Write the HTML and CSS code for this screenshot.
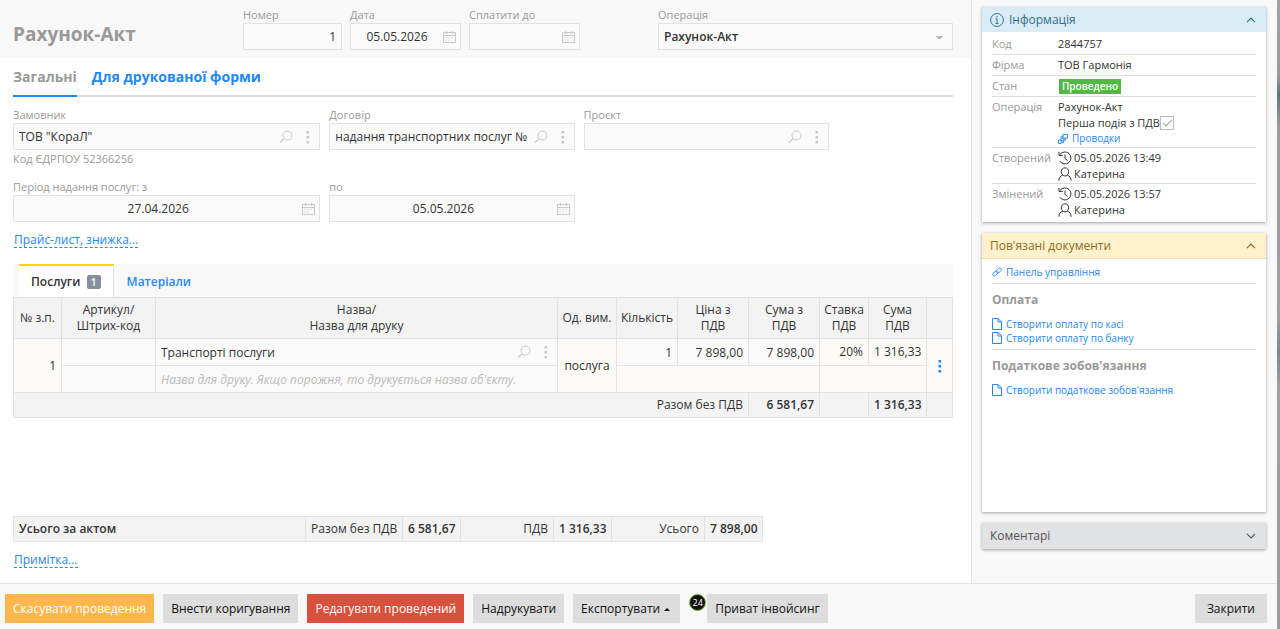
FILE: index.html
```
<!DOCTYPE html>
<html lang="uk">
  <head>
    <meta charset="UTF-8" />
    <meta name="viewport" content="width=device-width, initial-scale=1.0" />
    <title>Рахунок-Акт</title>
    <link rel="stylesheet" href="styles.css">
  </head>
  <body>
    <!-- Icons -->
    <svg class="sprite" aria-hidden="true">
      <symbol id="i-calendar" viewBox="0 0 14 14">
        <path d="M1.5 2.500h12v10h-12zM1.500 5.500h12M4.500 1v3M10.500 1v3" fill="none" stroke="currentColor" />
        <path d="M3 7.500h9M3 10h6" fill="none" stroke="currentColor" stroke-dasharray="2 1" opacity=".6" />
      </symbol>
      <symbol id="i-search" viewBox="0 0 14 14">
        <circle cx="8.500" cy="5.500" r="4.500" fill="none" stroke="currentColor" />
        <path d="M5.200 8.800 1 12.500" fill="none" stroke="currentColor" stroke-width="1.200" />
      </symbol>
      <symbol id="i-dots" viewBox="0 0 4 14">
        <path d="M.5 1h2.600v2.600H.5zM.5 6h2.600v2.600H.5zM.5 11h2.600v2.600H.5z" fill="currentColor" />
      </symbol>
      <symbol id="i-up" viewBox="0 0 10 6">
        <path d="M1 5.200 5 1.200l4 4" fill="none" stroke="currentColor" stroke-width="1.200" />
      </symbol>
      <symbol id="i-down" viewBox="0 0 10 6">
        <path d="M1 .8l4 4 4-4" fill="none" stroke="currentColor" stroke-width="1.200" />
      </symbol>
      <symbol id="i-info" viewBox="0 0 14 14">
        <circle cx="7" cy="7" r="6.400" fill="none" stroke="currentColor" />
        <path d="M7 3v1.400M5.700 5.800H7v4.600M5.500 10.500h3" fill="none" stroke="currentColor" />
      </symbol>
      <symbol id="i-history" viewBox="0 0 14 14">
        <path d="M2 3.600A6 6 0 1 1 1.800 10M1 .8v3.600h3.800M7 3.500v4l2.600 2" fill="none" stroke="currentColor" />
      </symbol>
      <symbol id="i-user" viewBox="0 0 14 14">
        <path d="M7 .8c2.300 0 3.700 1.700 3.700 4S9 9 7 9 3.300 7 3.300 4.800 4.700.8 7 .8zM4.800 8.200C2.300 9 .9 10.500.9 13.700M9.200 8.200c2.500.8 3.900 2.300 3.900 5.500" fill="none" stroke="currentColor" />
      </symbol>
      <symbol id="i-entries" viewBox="0 0 11 11">
        <path d="M5.500.5h5v4h-5zM3.500 4.500v-2h2M8 4.500v2.500H6.500M3.500 4.500h3v3h-3zM.5 6.500h3v4h-3zM3.500 9.500H6V7.500" fill="none" stroke="currentColor" />
      </symbol>
      <symbol id="i-link" viewBox="0 0 12 12">
        <rect x="4.700" y="2.300" width="7" height="3.800" rx="1.900" transform="rotate(-45 8.200 4.200)" fill="none" stroke="currentColor" />
        <rect x=".3" y="5.900" width="7" height="3.800" rx="1.900" transform="rotate(-45 3.800 7.800)" fill="none" stroke="currentColor" />
      </symbol>
      <symbol id="i-doc" viewBox="0 0 10 12">
        <path d="M.5.5H6l3.500 3.500v7.500h-9zM6 .5V4h3.500" fill="none" stroke="currentColor" />
      </symbol>
    </svg>

    <div class="window">
      <div class="workspace">
        <main class="document">
          <header class="doc-header">
            <h1>Рахунок-Акт</h1>
            <div class="field field-number">
              <label for="number">Номер</label>
              <div class="box"><input class="right" id="number" type="text" value="1" /></div>
            </div>
            <div class="field field-date">
              <label for="date">Дата</label>
              <div class="box">
                <input class="center" id="date" type="text" value="05.05.2026" />
                <button class="icon-btn" aria-label="Календар"><svg class="icon"><use href="#i-calendar" /></svg></button>
              </div>
            </div>
            <div class="field field-date">
              <label for="payUntil">Сплатити до</label>
              <div class="box">
                <input class="center" id="payUntil" type="text" />
                <button class="icon-btn" aria-label="Календар"><svg class="icon"><use href="#i-calendar" /></svg></button>
              </div>
            </div>
            <div class="field field-operation">
              <label for="operation">Операція</label>
              <div class="box">
                <select id="operation">
                  <option>Рахунок-Акт</option>
                </select>
              </div>
            </div>
          </header>

          <div class="doc-body">
            <nav class="main-tabs">
              <a class="active" href="#general">Загальні</a>
              <a href="#print">Для друкованої форми</a>
            </nav>

            <div class="form-grid">
              <div class="field">
                <label for="customer">Замовник</label>
                <div class="box">
                  <input id="customer" type="text" value='ТОВ "КораЛ"' />
                  <button class="icon-btn" aria-label="Пошук"><svg class="icon"><use href="#i-search" /></svg></button>
                  <button class="icon-btn dots" aria-label="Меню"><svg class="icon"><use href="#i-dots" /></svg></button>
                </div>
                <p class="hint">Код ЄДРПОУ 52366256</p>
              </div>
              <div class="field">
                <label for="contract">Договір</label>
                <div class="box">
                  <input id="contract" type="text" value="надання транспортних послуг № 01" />
                  <button class="icon-btn" aria-label="Пошук"><svg class="icon"><use href="#i-search" /></svg></button>
                  <button class="icon-btn dots" aria-label="Меню"><svg class="icon"><use href="#i-dots" /></svg></button>
                </div>
              </div>
              <div class="field">
                <label for="project">Проєкт</label>
                <div class="box">
                  <input id="project" type="text" />
                  <button class="icon-btn" aria-label="Пошук"><svg class="icon"><use href="#i-search" /></svg></button>
                  <button class="icon-btn dots" aria-label="Меню"><svg class="icon"><use href="#i-dots" /></svg></button>
                </div>
              </div>
            </div>

            <div class="form-grid period">
              <div class="field">
                <label for="from">Період надання послуг: з</label>
                <div class="box">
                  <input class="center" id="from" type="text" value="27.04.2026" />
                  <button class="icon-btn" aria-label="Календар"><svg class="icon"><use href="#i-calendar" /></svg></button>
                </div>
              </div>
              <div class="field">
                <label for="to">по</label>
                <div class="box">
                  <input class="center" id="to" type="text" value="05.05.2026" />
                  <button class="icon-btn" aria-label="Календар"><svg class="icon"><use href="#i-calendar" /></svg></button>
                </div>
              </div>
            </div>

            <a class="toggle-link" href="#price">Прайс-лист, знижка...</a>

            <nav class="table-tabs">
              <a class="active" href="#services">Послуги <span class="count">1</span></a>
              <a href="#materials">Матеріали</a>
            </nav>

            <table class="items">
              <colgroup>
                <col class="c-num" /><col class="c-code" /><col /><col class="c-unit" /><col class="c-qty" />
                <col class="c-price" /><col class="c-price" /><col class="c-rate" /><col class="c-vat" /><col class="c-menu" />
              </colgroup>
              <thead>
                <tr>
                  <th>№ з.п.</th>
                  <th>Артикул/<br />Штрих-код</th>
                  <th>Назва/<br />Назва для друку</th>
                  <th>Од. вим.</th>
                  <th>Кількість</th>
                  <th>Ціна з<br />ПДВ</th>
                  <th>Сума з<br />ПДВ</th>
                  <th>Ставка<br />ПДВ</th>
                  <th>Сума<br />ПДВ</th>
                  <th></th>
                </tr>
              </thead>
              <tbody>
                <tr>
                  <td class="right locked" rowspan="2">1</td>
                  <td><input type="text" aria-label="Артикул" /></td>
                  <td class="lookup">
                    <div class="cell">
                      <input type="text" aria-label="Назва" value="Транспорті послуги" />
                      <button class="icon-btn" aria-label="Пошук"><svg class="icon"><use href="#i-search" /></svg></button>
                      <button class="icon-btn dots" aria-label="Меню"><svg class="icon"><use href="#i-dots" /></svg></button>
                    </div>
                  </td>
                  <td class="center locked" rowspan="2">послуга</td>
                  <td><input class="right" type="text" aria-label="Кількість" value="1" /></td>
                  <td><input class="right" type="text" aria-label="Ціна з ПДВ" value="7 898,00" /></td>
                  <td><input class="right" type="text" aria-label="Сума з ПДВ" value="7 898,00" /></td>
                  <td class="right locked">20%</td>
                  <td class="right locked">1 316,33</td>
                  <td class="locked" rowspan="2">
                    <button class="icon-btn dots row-menu" aria-label="Дії з рядком"><svg class="icon"><use href="#i-dots" /></svg></button>
                  </td>
                </tr>
                <tr>
                  <td><input type="text" aria-label="Штрих-код" /></td>
                  <td><input type="text" aria-label="Назва для друку" placeholder="Назва для друку. Якщо порожня, то друкується назва об'єкту." /></td>
                  <td class="locked" colspan="3"></td>
                  <td class="locked" colspan="2"></td>
                </tr>
              </tbody>
              <tfoot>
                <tr>
                  <td class="right" colspan="6">Разом без ПДВ</td>
                  <td class="right"><b>6 581,67</b></td>
                  <td></td>
                  <td class="right"><b>1 316,33</b></td>
                  <td></td>
                </tr>
              </tfoot>
            </table>

            <table class="totals">
              <colgroup>
                <col /><col class="c-net-label" /><col class="c-sum" /><col class="c-label" />
                <col class="c-sum" /><col class="c-label" /><col class="c-sum" />
              </colgroup>
              <tr>
                <th>Усього за актом</th>
                <td>Разом без ПДВ</td>
                <td><b>6 581,67</b></td>
                <td>ПДВ</td>
                <td><b>1 316,33</b></td>
                <td>Усього</td>
                <td><b>7 898,00</b></td>
              </tr>
            </table>

            <a class="toggle-link note" href="#note">Примітка...</a>
          </div>
        </main>

        <aside class="sidebar">
          <section class="card info">
            <h2>
              <svg class="icon"><use href="#i-info" /></svg>
              <span>Інформація</span>
              <button class="chevron" aria-label="Згорнути"><svg><use href="#i-up" /></svg></button>
            </h2>
            <dl>
              <div><dt>Код</dt><dd>2844757</dd></div>
              <div><dt>Фірма</dt><dd>ТОВ Гармонія</dd></div>
              <div><dt>Стан</dt><dd><span class="status">Проведено</span></dd></div>
              <div>
                <dt>Операція</dt>
                <dd>
                  Рахунок-Акт
                  <label class="first-event">Перша подія з ПДВ<input type="checkbox" checked /></label>
                  <a class="doc-link entries" href="#entries"><svg><use href="#i-entries" /></svg>Проводки</a>
                </dd>
              </div>
              <div>
                <dt>Створений</dt>
                <dd>
                  <span class="stamp"><svg class="icon"><use href="#i-history" /></svg>05.05.2026 13:49</span>
                  <span class="stamp"><svg class="icon"><use href="#i-user" /></svg>Катерина</span>
                </dd>
              </div>
              <div>
                <dt>Змінений</dt>
                <dd>
                  <span class="stamp"><svg class="icon"><use href="#i-history" /></svg>05.05.2026 13:57</span>
                  <span class="stamp"><svg class="icon"><use href="#i-user" /></svg>Катерина</span>
                </dd>
              </div>
            </dl>
          </section>

          <section class="card related">
            <h2>
              <span>Пов'язані документи</span>
              <button class="chevron" aria-label="Згорнути"><svg><use href="#i-up" /></svg></button>
            </h2>
            <div class="related-group">
              <a class="doc-link" href="#panel"><svg><use href="#i-link" /></svg>Панель управління</a>
            </div>
            <div class="related-group">
              <h3>Оплата</h3>
              <a class="doc-link" href="#cash"><svg><use href="#i-doc" /></svg>Створити оплату по касі</a>
              <a class="doc-link" href="#bank"><svg><use href="#i-doc" /></svg>Створити оплату по банку</a>
            </div>
            <div class="related-group">
              <h3>Податкове зобов'язання</h3>
              <a class="doc-link" href="#tax"><svg><use href="#i-doc" /></svg>Створити податкове зобов'язання</a>
            </div>
          </section>

          <section class="card comments">
            <h2>
              <span>Коментарі</span>
              <button class="chevron" aria-label="Розгорнути"><svg><use href="#i-down" /></svg></button>
            </h2>
          </section>
        </aside>
      </div>

      <footer class="actions">
        <button class="btn btn-warning">Скасувати проведення</button>
        <button class="btn">Внести коригування</button>
        <button class="btn btn-danger">Редагувати проведений</button>
        <button class="btn">Надрукувати</button>
        <button class="btn">Експортувати<span class="caret-up"></span></button>
        <div class="privat">
          <span class="privat-logo">24</span>
          <button class="btn">Приват інвойсинг</button>
        </div>
        <button class="btn btn-close">Закрити</button>
      </footer>
    </div>
  </body>
</html>
```
FILE: styles.css
```
* {
  box-sizing: border-box;
}

body {
  margin: 0;
  padding-right: 3px;
  background: linear-gradient(#a2a2a2 0%, #999 12%, #60747a 15%, #9a9a9a 20%, #a0a0a0 50%, #7e868d 56%, #a0a0a0 62%, #9a9a9a 100%);
  color: #333;
  font-family: "Open Sans", "Noto Sans", sans-serif;
  font-size: 12px;
  line-height: 16px;
}

button,
input,
select {
  font: inherit;
  color: inherit;
}

a {
  color: #1e88f5;
  text-decoration: none;
}

.sprite {
  display: none;
}

.icon {
  display: block;
  flex: none;
  width: 14px;
  height: 14px;
}

.right {
  text-align: right;
}

.center {
  text-align: center;
}

.window {
  display: flex;
  flex-direction: column;
  min-height: 100vh;
  background: #fff;
}

.workspace {
  display: flex;
  flex: 1;
}

.document {
  display: flex;
  flex: 1;
  flex-direction: column;
  min-width: 0;
}

/* Header */
.doc-header {
  display: flex;
  gap: 8px;
  padding: 7px 18px 8px 13px;
  background: #f8f8f8;
}

.doc-header h1 {
  flex: 1;
  max-width: 222px;
  margin: 0;
  padding-top: 14px;
  color: #999;
  font-size: 19px;
  line-height: 26px;
}

.field label {
  display: block;
  color: #999;
  font-size: 11px;
}

.field-number {
  width: 99px;
}

.field-date {
  width: 111px;
}

.field-operation {
  width: 295px;
  margin-left: auto;
}

.box {
  display: flex;
  align-items: center;
  height: 27px;
  border: 1px solid #e2e2e2;
  background: #fafafa;
}

.box input,
.box select,
.items input {
  flex: 1;
  width: 100%;
  min-width: 0;
  height: 25px;
  padding: 0;
  border: none;
  outline: none;
  background: none;
}

.box input {
  margin-left: 5px;
}

.box input:last-child {
  margin-right: 5px;
}

.box select {
  padding: 0 5px;
  appearance: none;
  font-weight: 600;
  background: linear-gradient(#bbb, #bbb) no-repeat right 9px center / 7px 1px,
    linear-gradient(#bbb, #bbb) no-repeat right 10px top 13px / 5px 1px,
    linear-gradient(#bbb, #bbb) no-repeat right 11px top 14px / 3px 1px;
}

.icon-btn {
  display: flex;
  justify-content: center;
  flex: none;
  width: 22px;
  padding: 0;
  border: none;
  background: none;
  color: #c8c8c8;
}

.icon-btn.dots .icon {
  width: 4px;
}

/* Document form */
.doc-body {
  display: flex;
  flex: 1;
  flex-direction: column;
  padding: 0 18px 15px 13px;
}

.main-tabs {
  display: flex;
  gap: 15px;
  margin-bottom: 10px;
  border-bottom: 2px solid #ddd;
  font-size: 14px;
  font-weight: 700;
  line-height: 37px;
}

.main-tabs a {
  margin-bottom: -2px;
  border-bottom: 2px solid #ddd;
}

.main-tabs .active {
  border-color: #1e88f5;
  color: #999;
}

.form-grid {
  display: grid;
  grid-template-columns: 307fr 245fr 245fr 115fr;
  gap: 9px;
}

.period {
  margin-top: 12px;
}

.hint {
  margin: 1px 0 0;
  color: #999;
  font-size: 11px;
}

.toggle-link {
  align-self: flex-start;
  margin: 10px 1px 16px;
  border-bottom: 1px dashed #1e88f5;
  line-height: 15px;
}

.toggle-link.note {
  margin: 10px 1px 0;
}

/* Items table */
.table-tabs {
  display: flex;
  padding-left: 6px;
  background: #f8f8f8;
  font-weight: 600;
  line-height: 31px;
}

.table-tabs a {
  padding: 2px 13px 0;
}

.table-tabs .active {
  padding: 0 12px;
  border-top: 2px solid #ffd500;
  border-right: 1px solid #e0e0e0;
  background: #fff;
  color: #333;
}

.count {
  display: inline-block;
  width: 14px;
  margin-left: 3px;
  border-radius: 2px;
  background: #868fa0;
  color: #fff;
  font-size: 10px;
  line-height: 14px;
  text-align: center;
}

table {
  border-collapse: collapse;
  table-layout: fixed;
}

th,
td {
  padding: 0 5px;
  border: 1px solid #e2e2e2;
  white-space: nowrap;
}

.items {
  width: 100%;
}

.items th {
  height: 41px;
  padding: 0;
  background: #f3f3f3;
  font-weight: 400;
}

.items td {
  height: 27px;
  background: #fafafa;
}

.items .locked {
  background: #fbfaf6;
}

.items .lookup {
  padding-right: 0;
}

.items tfoot td {
  height: 25px;
  background: #f3f3f3;
}

.items input {
  display: block;
}

.items input::placeholder {
  color: #bbb;
  font-style: italic;
}

.cell {
  display: flex;
  align-items: center;
}

.row-menu {
  width: 100%;
  color: #1e88f5;
}

b,
.totals th {
  font-weight: 600;
}

.c-num { width: 48px; }
.c-code { width: 94px; }
.c-unit { width: 59px; }
.c-qty { width: 61px; }
.c-price { width: 71px; }
.c-rate { width: 49px; }
.c-vat { width: 58px; }
.c-menu { width: 26px; }

.totals {
  width: 100%;
  max-width: 750px;
  margin-top: auto;
  background: #f3f3f3;
  text-align: right;
}

.totals th,
.totals td {
  height: 25px;
}

.totals th {
  text-align: left;
}

.c-net-label { width: 97px; }
.c-sum { width: 58px; }
.c-label { width: 93px; }

/* Sidebar */
.sidebar {
  display: flex;
  flex: 0 0 306px;
  flex-direction: column;
  gap: 11px;
  padding: 7px 11px 34px 10px;
  border-left: 1px solid #e4e4e4;
  background: #f8f8f8;
}

.card {
  background: #fff;
  box-shadow: 0 1px 3px rgba(0, 0, 0, 0.35);
}

.card h2 {
  display: flex;
  align-items: center;
  gap: 5px;
  height: 26px;
  margin: 0;
  padding: 0 10px 0 8px;
  font-size: 12px;
  font-weight: 400;
}

.chevron {
  margin-left: auto;
  padding: 0;
  border: none;
  background: none;
}

.chevron svg {
  display: block;
  width: 10px;
  height: 6px;
}

.card.info h2 {
  height: 25px;
  background: #d9ecf5;
  color: #31708f;
}

.info dl {
  margin: 0;
  padding: 2px 10px 3px;
  font-size: 11px;
}

.info dl > div {
  display: flex;
  min-height: 21px;
  padding: 2px 0 1px;
  border-bottom: 1px solid #ddd;
}

.info dl > div:last-child {
  border-bottom: none;
}

.info dt {
  flex: 0 0 66px;
  color: #999;
}

.info dd {
  margin: 0;
}

.status {
  display: block;
  margin: 1px;
  padding: 0 3px;
  background: #54b848;
  color: #fff;
  font-size: 10px;
  font-weight: 600;
  line-height: 15px;
}

.first-event {
  display: flex;
  align-items: center;
  height: 16px;
}

.first-event input {
  width: 14px;
  height: 14px;
  margin: 0;
  border: 1px solid #bbb;
  appearance: none;
}

.first-event input:checked::before {
  content: "";
  display: block;
  width: 8px;
  height: 4px;
  margin: 2px;
  border: solid #999;
  border-width: 0 0 1px 1px;
  transform: rotate(-45deg);
}

.stamp {
  display: flex;
  align-items: center;
  gap: 2px;
}

.doc-link {
  display: flex;
  align-items: center;
  gap: 4px;
  font-size: 10px;
  line-height: 14px;
}

.doc-link svg {
  width: 10px;
  height: 12px;
}

.entries {
  line-height: 15px;
}

.related {
  flex: 1;
}

.related h2 {
  margin-bottom: 6px;
  border-bottom: 1px solid #efe0b0;
  background: #fff1cc;
  color: #8a6d1b;
}

.related-group {
  margin: 0 10px;
  padding-bottom: 4px;
  border-bottom: 1px solid #ddd;
}

.related-group:last-child {
  border-bottom: none;
}

.related-group h3 {
  margin: 0;
  padding: 8px 0 9px;
  color: #999;
  font-size: 12px;
  line-height: 16px;
}

.comments h2 {
  background: #e1e2e4;
  color: #555;
}

/* Bottom buttons */
.actions {
  display: flex;
  gap: 9px;
  padding: 10px 10px 6px 5px;
  border-top: 1px solid #e4e4e4;
  background: #f8f8f8;
}

.btn {
  height: 29px;
  padding: 0 8px;
  border: none;
  background: #ddd;
  color: #111;
  cursor: pointer;
}

.btn-warning {
  background: #ffb74d;
  color: #fff;
}

.btn-danger {
  background: #d9503c;
  color: #fff;
}

.btn-close {
  margin-left: auto;
  padding: 0 12px;
}

.caret-up {
  display: inline-block;
  margin: 0 2px 0 4px;
  border: 3px solid transparent;
  border-top: none;
  border-bottom-color: #111;
  vertical-align: middle;
}

.privat {
  display: flex;
  gap: 1px;
}

.privat-logo {
  width: 17px;
  height: 17px;
  border: 1px solid #7db72f;
  border-radius: 50%;
  background: #111;
  color: #fff;
  font-size: 9px;
  line-height: 15px;
  text-align: center;
}
```
